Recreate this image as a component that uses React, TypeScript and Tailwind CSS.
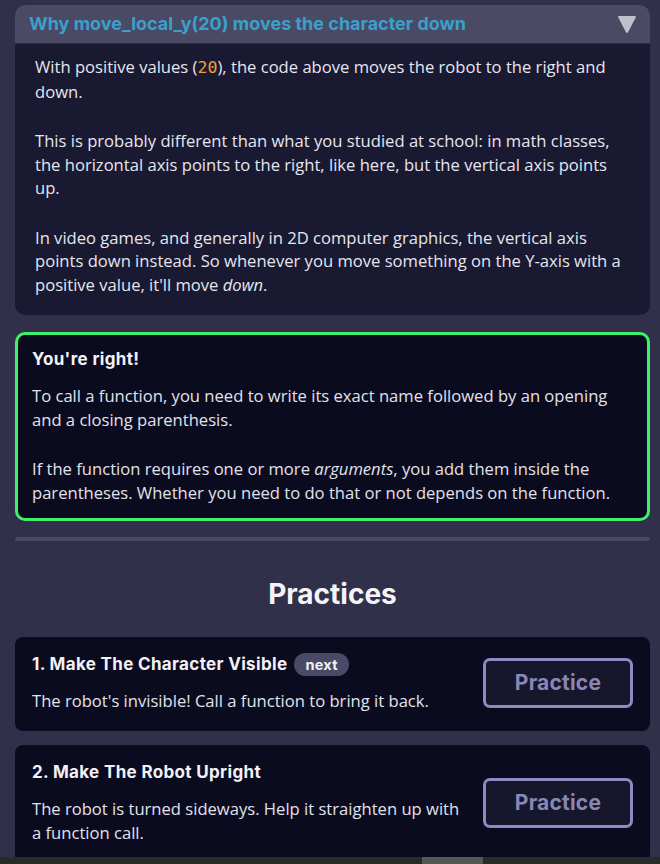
import React from 'react';

const heading = { fontFamily: 'Inter, "Noto Sans", sans-serif' };
const body = { fontFamily: '"Open Sans", "Noto Sans", sans-serif' };

function PracticeCard({ title, text, badge }: { title: string; text: string; badge?: string }) {
  return (
    <div className="flex items-center gap-[22px] rounded-[8px] bg-[#0b0b20] pt-[15px] pr-[17px] pb-[18px] pl-[17px]">
      <div className="flex-1">
        <div className="flex items-center gap-[7px]" style={heading}>
          <h3 className="text-[17px] font-bold leading-[24px] tracking-[0.02em] text-[#f2f2f6]">{title}</h3>
          {badge && (
            <span className="rounded-full bg-[#4a4a66] px-[11px] text-[14.5px] font-bold leading-[23px] tracking-[0.02em] text-[#f2f2f6]">
              {badge}
            </span>
          )}
        </div>
        <p className="mt-[13px] text-[16.6px] leading-[24px] text-[#e2e2ea]" style={body}>
          {text}
        </p>
      </div>
      <button
        className="h-[50px] w-[150px] shrink-0 rounded-[7px] border-[3px] border-[#8f8ac0] bg-[#16162c] text-[21px] font-bold tracking-[0.01em] text-[#8a87b5]"
        style={heading}
      >
        Practice
      </button>
    </div>
  );
}

export default function App() {
  return (
    <div className="flex h-[864px] w-[660px] flex-col overflow-hidden bg-[#30304a]">
      <div className="flex-1 overflow-hidden pt-[5px] pr-[10px] pl-[15px]">
        <div className="overflow-hidden rounded-[10px] bg-[#191932]">
          <div className="flex h-[39px] items-center justify-between border-b border-[#2c2c46] bg-[#4a4a64] pr-[13px] pl-[14px]">
            <span className="pb-[2px] text-[18px] font-bold text-[#3aa0cc]" style={heading}>
              Why move_local_y(20) moves the character down
            </span>
            <svg width="20" height="19" viewBox="0 0 20 19">
              <path d="M2 1 H18 Q19.5 1 18.7 2.4 L11.2 17 Q10 18.8 8.8 17 L1.3 2.4 Q0.5 1 2 1 Z" fill="#c0c0cc" />
            </svg>
          </div>
          <div className="flex flex-col gap-[26px] px-[20px] pt-[11px] pb-[19px] text-[16.6px] leading-[23.5px] text-[#e6e6ee]" style={body}>
            <p>
              With positive values (<span className="text-[#f0a030]" style={{ fontFamily: '"DejaVu Sans Mono", monospace' }}>20</span>), the code above moves the robot to the right and down.
            </p>
            <p>
              This is probably different than what you studied at school: in math classes, the horizontal axis points to the right, like here, but the vertical axis points up.
            </p>
            <p>
              In video games, and generally in 2D computer graphics, the vertical axis points down instead. So whenever you move something on the Y-axis with a positive value, it'll move <em>down</em>.
            </p>
          </div>
        </div>

        <div className="mt-[17px] rounded-[10px] border-[3px] border-[#3cf26a] bg-[#0b0b1f] px-[14px] pt-[12px] pb-[14px]">
          <h4 className="text-[17px] font-bold leading-[24px] tracking-[0.02em] text-[#f2f2f6]" style={heading}>
            You're right!
          </h4>
          <div className="mt-[13px] flex flex-col gap-[26px] text-[16.6px] leading-[23.5px] text-[#e2e2ea]" style={body}>
            <p>To call a function, you need to write its exact name followed by an opening and a closing parenthesis.</p>
            <p>
              If the function requires one or more <em>arguments</em>, you add them inside the parentheses. Whether you need to do that or not depends on the function.
            </p>
          </div>
        </div>

        <div className="mt-[16px] h-[4px] rounded-full bg-[#4a4a64]" />

        <h2 className="mt-[35px] text-center text-[28px] font-bold leading-[36px] text-[#f4f4f8]" style={heading}>
          Practices
        </h2>

        <div className="mt-[25px] flex flex-col gap-[14px]">
          <PracticeCard
            title="1. Make The Character Visible"
            badge="next"
            text="The robot's invisible! Call a function to bring it back."
          />
          <PracticeCard
            title="2. Make The Robot Upright"
            text="The robot is turned sideways. Help it straighten up with a function call."
          />
        </div>
      </div>
      <div className="flex h-[7px] shrink-0 bg-[#2a2a2a]">
        <div className="ml-[422px] h-full w-[61px] bg-[#575757]" />
      </div>
    </div>
  );
}
